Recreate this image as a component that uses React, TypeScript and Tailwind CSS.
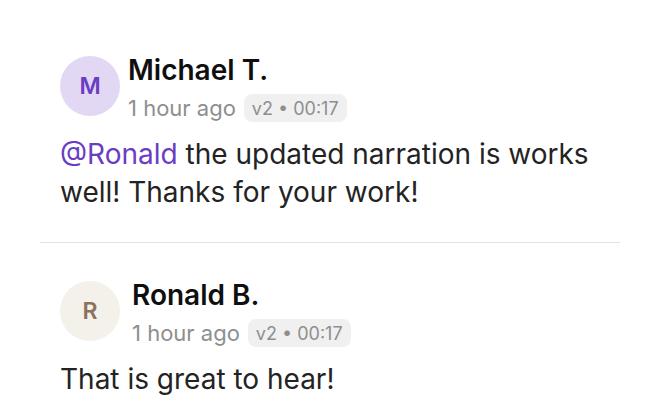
import React from "react";

type Comment = {
  initial: string;
  name: string;
  time: string;
  version: string;
  avatarClass: string;
  gapClass: string;
  mention?: string;
  body: string;
};

const comments: Comment[] = [
  {
    initial: "M",
    name: "Michael T.",
    time: "1 hour ago",
    version: "v2 • 00:17",
    avatarClass: "bg-[#e2d8f3] text-[#6a3dc2]",
    gapClass: "gap-[8px]",
    mention: "@Ronald",
    body: " the updated narration is works well! Thanks for your work!",
  },
  {
    initial: "R",
    name: "Ronald B.",
    time: "1 hour ago",
    version: "v2 • 00:17",
    avatarClass: "bg-[#f4f1eb] text-[#8a735c]",
    gapClass: "gap-[12px]",
    body: "That is great to hear!",
  },
];

function CommentItem({ c }: { c: Comment }) {
  return (
    <div className="px-5">
      <div className={`flex items-start ${c.gapClass}`}>
        <div
          className={`mt-[3px] flex h-[60px] w-[60px] shrink-0 items-center justify-center rounded-full text-[23px] font-semibold ${c.avatarClass}`}
        >
          {c.initial}
        </div>
        <div className="flex flex-col">
          <span className="text-[28px] leading-[34px] font-semibold text-[#0f0f0f]">{c.name}</span>
          <div className="mt-[7px] flex h-[28px] items-center gap-[8px]">
            <span className="text-[22px] leading-[28px] text-[#8e8e8e]">{c.time}</span>
            <span className="flex h-[28px] items-center rounded-[8px] bg-[#f0f0f0] px-[8px] text-[18px] text-[#8e8e8e]">
              {c.version}
            </span>
          </div>
        </div>
      </div>
      <p className="mt-[13px] text-[28px] leading-[38px] text-[#232323]">
        {c.mention && <span className="text-[#6a3dc2]">{c.mention}</span>}
        {c.body}
      </p>
    </div>
  );
}

export default function App() {
  return (
    <div
      className="h-[416px] w-[660px] overflow-hidden bg-white px-10 pt-[53px]"
      style={{ fontFamily: "Inter, 'Noto Sans', sans-serif" }}
    >
      <CommentItem c={comments[0]} />
      <div className="mt-[31px] mb-[35px] h-px bg-[#e3e3e3]" />
      <CommentItem c={comments[1]} />
    </div>
  );
}
